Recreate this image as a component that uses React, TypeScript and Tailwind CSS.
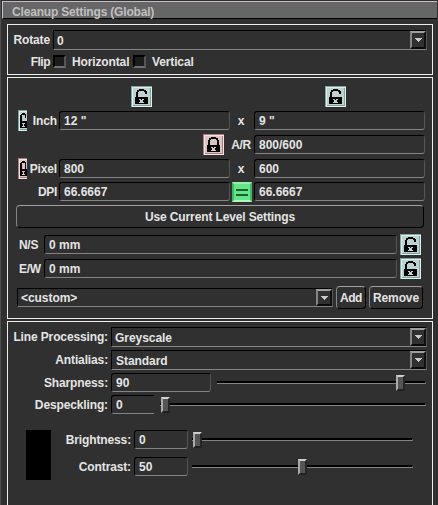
import React from 'react';

function Label({ className, children }: { className: string; children: React.ReactNode }) {
  return <span className={`shrink-0 whitespace-pre ${className}`}>{children}</span>;
}

function Field({ value, className }: { value: string; className: string }) {
  return (
    <div className={`flex h-[19px] shrink-0 items-center whitespace-pre rounded-[3px] border border-t-black border-r-[#555] border-b-[#858585] border-l-black pl-1 tracking-normal ${className}`}>
      {value}
    </div>
  );
}

function Select({ value, className, textClass = '' }: { value: string; className: string; textClass?: string }) {
  return (
    <div className={`flex shrink-0 items-center justify-between border border-t-black border-r-[#555] border-b-[#858585] border-l-black tracking-[-0.05px] ${className}`}>
      <span className={textClass}>{value}</span>
      <span className="flex h-full w-4 items-center justify-center border-2 border-t-[#a0a0a0] border-r-[#111] border-b-[#090909] border-l-[#858585]">
        <svg width="7" height="4" viewBox="0 0 7 4" shapeRendering="crispEdges" fill="#c8c8c8">
          <path d="M0 0h7v1H0zM1 1h5v1H1zM2 2h3v1H2zM3 3h1v1H3z" />
        </svg>
      </span>
    </div>
  );
}

function Lock({ locked = false, className = '' }: { locked?: boolean; className?: string }) {
  const fill = locked ? '#d9c3c3' : '#bcd2d0';
  const dark = locked ? '#a87e7e' : '#7ca5a1';
  const light = locked ? '#f4e2e2' : '#e0f0ee';
  return (
    <svg width="21" height="21" viewBox="0 0 21 21" shapeRendering="crispEdges" className={`shrink-0 ${className}`}>
      <path fill={dark} d="M0 0h21v21H0z" />
      <path fill={light} d="M1 1h20v20H1z" />
      <path fill={dark} d="M2 2h18v18H2z" />
      <path fill={fill} d="M2 2h17v17H2z" />
      <path d={locked ? 'M7 4h1V3h5v1h2v2h1v5h-2V6h-1V5H8v1H7v5H5V6h1V4z' : 'M7 4h1V3h5v1h2v1h1v3h-2V6h-1V5H8v1H7v5H5V6h1V4z'} />
      <path d="M4 11h13v7H4z" />
      <path fill={fill} d="M8 13h2v1H8zM11 13h2v1h-2zM9 14h3v1H9zM9 15h3v1H9zM8 16h5v1H8z" />
    </svg>
  );
}

function SmallLock({ locked = false }: { locked?: boolean }) {
  const dark = locked ? '#a87e7e' : '#7ca5a1';
  const light = locked ? '#f4e2e2' : '#e0f0ee';
  const fill = locked ? '#d9c3c3' : '#bcd2d0';
  return (
    <svg width="9" height="21" viewBox="0 0 9 21" shapeRendering="crispEdges" className="shrink-0">
      <path fill={dark} d="M0 0h9v21H0z" />
      <path fill={light} d="M1 1h8v20H1z" />
      <path fill={fill} d="M2 2h7v17H2z" />
      <path fill={dark} d="M2 19h7v1H2z" />
      <path d={locked ? 'M3 4h1V3h3v1h1v7H7V5H4v6H2V5h1z' : 'M3 4h1V3h3v1h1v4H7V5H4v6H2V5h1z'} />
      <path d="M2 11h7v7H2z" />
      <path fill={fill} d="M4 13h3v1H4zM5 14h1v2H5zM4 16h3v1H4z" />
    </svg>
  );
}

function Button({ className, children }: { className: string; children: React.ReactNode }) {
  return (
    <button className={`flex h-[23px] shrink-0 items-center justify-center rounded-[4px] border border-t-[#a0a0a0] border-r-black border-b-black border-l-[#858585] ${className}`}>
      {children}
    </button>
  );
}

function Check() {
  return <span className="size-[13px] shrink-0 border-2 border-t-black border-r-[#555] border-b-[#707070] border-l-black bg-[#1c1c1c]" />;
}

function Slider({ className, before }: { className: string; before: string }) {
  return (
    <div className={`flex h-4 shrink-0 items-center ${className}`}>
      <span className={`h-[3px] shrink-0 border-t-2 border-b border-t-black border-b-[#858585] ${before}`} />
      <span className="h-4 w-[9px] shrink-0 border-2 border-t-[#d0d0d0] border-r-[#252525] border-b-[#202020] border-l-[#aaa] bg-[#555]" />
      <span className="h-[3px] grow border-t-2 border-r border-b border-t-black border-r-[#666] border-b-[#858585]" />
    </div>
  );
}

export default function App() {
  return (
    <div className="flex h-[505px] w-[438px] flex-col overflow-hidden border-l border-l-[#505050] bg-[#303030] font-['Liberation_Sans',Arial,sans-serif] text-[12px] leading-[14px] font-bold tracking-[-0.13px] text-[#e4e4e4]">
      <div className="h-px shrink-0 bg-[#302c2f]" />
      <header className="ml-px flex h-[18px] w-[435px] shrink-0 items-center border-t border-b border-l border-t-[#c6c0c5] border-b-black border-l-[#c6c6c6] bg-[#666] pt-[3px] pl-[9px] tracking-[-0.18px] text-[#bfbfbf]">
        Cleanup Settings (Global)
      </header>

      <section className="mt-[5px] ml-1.5 h-[51px] w-[426px] shrink-0 border border-[#ededed] pt-[5px]">
        <div className="flex h-5 items-center">
          <Label className="w-[42px] text-right">Rotate</Label>
          <Select value="0" className="ml-[3px] h-5 w-[374px] pl-[3px]" textClass="pt-0.5" />
        </div>
        <div className="mt-[5px] flex h-[13px] items-center">
          <Label className="w-[42px] text-right tracking-[-0.5px]">Flip</Label>
          <span className="ml-[3px] flex"><Check /></span>
          <Label className="ml-1.5 w-[61px]">Horizontal</Label>
          <Check />
          <Label className="ml-1.5">Vertical</Label>
        </div>
      </section>

      <section className="mt-0.5 ml-1.5 h-[242px] w-[426px] shrink-0 border border-[#ededed] pt-2">
        <div className="flex pl-[123px]">
          <Lock />
          <Lock className="ml-[173px]" />
        </div>
        <div className="mt-[3px] flex h-[21px] items-center pl-[10px]">
          <SmallLock />
          <Label className="w-[30px] text-right">Inch</Label>
          <Field value={'12 "'} className="ml-0.5 w-[171px]" />
          <Label className="w-6 pr-0.5 text-center">x</Label>
          <Field value={'9 "'} className="w-[171px]" />
        </div>
        <div className="mt-[3px] flex h-[21px] items-center pl-[195px]">
          <Lock locked />
          <Label className="w-[27px] text-right tracking-[-0.3px]">A/R</Label>
          <Field value="800/600" className="ml-[3px] w-[171px]" />
        </div>
        <div className="mt-[3px] flex h-[21px] items-center pl-[10px]">
          <SmallLock locked />
          <Label className="w-[30px] text-right">Pixel</Label>
          <Field value="800" className="ml-0.5 w-[171px]" />
          <Label className="w-6 pr-0.5 text-center">x</Label>
          <Field value="600" className="w-[171px]" />
        </div>
        <div className="mt-[3px] flex h-5 items-start">
          <Label className="mt-[3px] w-[49px] text-right tracking-[-0.3px]">DPI</Label>
          <Field value="66.6667" className="ml-0.5 w-[171px]" />
          <span className="ml-0.5 flex h-5 w-5 shrink-0 flex-col items-center justify-center gap-[3px] border-2 border-t-[#96f0ac] border-r-[#45b768] border-b-[#b4f5c0] border-l-[#40b862] bg-[#65e58a]">
            <span className="h-0.5 w-3 bg-[#185f32]" />
            <span className="h-0.5 w-3 bg-[#185f32]" />
          </span>
          <Field value="66.6667" className="ml-0.5 w-[171px]" />
        </div>
        <Button className="mt-[3px] ml-2 w-[408px]">Use Current Level Settings</Button>
        <div className="mt-1.5 flex h-[21px] items-center pl-[11px]">
          <Label className="w-[25px] tracking-[-0.3px]">N/S</Label>
          <Field value="0 mm" className="w-[353px]" />
          <Lock className="ml-[3px]" />
        </div>
        <div className="mt-[3px] flex h-[21px] items-center pl-[11px]">
          <Label className="w-[25px] tracking-[-0.3px]">E/W</Label>
          <Field value="0 mm" className="w-[353px]" />
          <Lock className="ml-[3px]" />
        </div>
        <div className="mt-[7px] flex h-[23px] items-center pl-[9px]">
          <Select value="<custom>" className="h-[19px] w-[316px] pl-[3px]" />
          <Button className="ml-[3px] w-[30px] tracking-[-0.4px]">Add</Button>
          <Button className="ml-[3px] w-[54px]">Remove</Button>
        </div>
      </section>

      <section className="mt-0.5 ml-1.5 h-[184px] w-[426px] shrink-0 border border-b-0 border-[#ededed] pt-[5px]">
        <div className="flex h-5 items-center">
          <Label className="w-[100px] text-right">Line Processing:</Label>
          <Select value="Greyscale" className="ml-[3px] h-5 w-[316px] pl-[3px]" textClass="pt-0.5" />
        </div>
        <div className="mt-[3px] flex h-5 items-center">
          <Label className="w-[100px] text-right">Antialias:</Label>
          <Select value="Standard" className="ml-[3px] h-5 w-[316px] pl-1" textClass="pt-0.5" />
        </div>
        <div className="mt-[3px] flex h-[19px] items-center">
          <Label className="w-[100px] text-right">Sharpness:</Label>
          <Field value="90" className="ml-[3px] w-[100px]" />
          <Slider className="ml-1.5 w-[209px]" before="w-[179px]" />
        </div>
        <div className="mt-[3px] flex h-[19px] items-center">
          <Label className="w-[100px] text-right">Despeckling:</Label>
          <Field value="0" className="ml-[3px] w-[43px] rounded-r-none border-r-0" />
          <Slider className="ml-1.5 w-[266px]" before="w-px" />
        </div>
        <div className="mt-4 flex">
          <span className="ml-[18px] h-[50px] w-[25px] shrink-0 bg-black" />
          <div>
            <div className="flex h-[19px] items-center">
              <Label className="w-20 text-right">Brightness:</Label>
              <Field value="0" className="ml-[3px] w-[54px]" />
              <Slider className="ml-1 w-[221px]" before="w-px" />
            </div>
            <div className="mt-2 flex h-[19px] items-center">
              <Label className="w-20 text-right">Contrast:</Label>
              <Field value="50" className="ml-[3px] w-[54px]" />
              <Slider className="ml-1 w-[221px]" before="w-[106px]" />
            </div>
          </div>
        </div>
      </section>
    </div>
  );
}
